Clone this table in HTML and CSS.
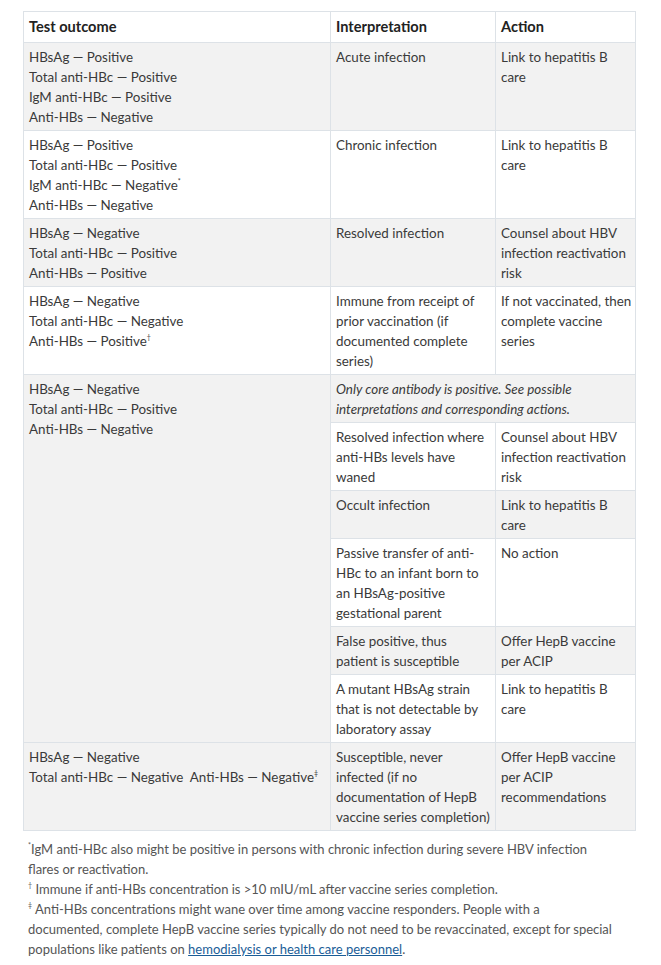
FILE: index.html
```html
<!DOCTYPE html>
<html>
<head>
<meta charset="utf-8">
<link rel="stylesheet" href="styles.css">
</head>
<body>
<div class="page">
<table class="hbv">
  <colgroup>
    <col class="c1"><col class="c2"><col class="c3">
  </colgroup>
  <thead>
    <tr><th>Test outcome</th><th>Interpretation</th><th>Action</th></tr>
  </thead>
  <tbody>
    <tr>
      <td>HBsAg — Positive<br>Total anti-HBc — Positive<br>IgM anti-HBc — Positive<br>Anti-HBs — Negative</td>
      <td>Acute infection</td>
      <td>Link to hepatitis B care</td>
    </tr>
    <tr>
      <td>HBsAg — Positive<br>Total anti-HBc — Positive<br>IgM anti-HBc — Negative<sup>*</sup><br>Anti-HBs — Negative</td>
      <td>Chronic infection</td>
      <td>Link to hepatitis B care</td>
    </tr>
    <tr>
      <td>HBsAg — Negative<br>Total anti-HBc — Positive<br>Anti-HBs — Positive</td>
      <td>Resolved infection</td>
      <td>Counsel about HBV infection reactivation risk</td>
    </tr>
    <tr>
      <td>HBsAg — Negative<br>Total anti-HBc — Negative<br>Anti-HBs — Positive<sup>†</sup></td>
      <td>Immune from receipt of prior vaccination (if documented complete series)</td>
      <td>If not vaccinated, then complete vaccine series</td>
    </tr>
    <tr>
      <td rowspan="6">HBsAg — Negative<br>Total anti-HBc — Positive<br>Anti-HBs — Negative</td>
      <td colspan="2"><em>Only core antibody is positive. See possible interpretations and corresponding actions.</em></td>
    </tr>
    <tr>
      <td>Resolved infection where anti-HBs levels have waned</td>
      <td>Counsel about HBV infection reactivation risk</td>
    </tr>
    <tr>
      <td>Occult infection</td>
      <td>Link to hepatitis B care</td>
    </tr>
    <tr>
      <td>Passive transfer of anti-HBc to an infant born to an HBsAg-positive gestational parent</td>
      <td>No action</td>
    </tr>
    <tr>
      <td>False positive, thus<br>patient is susceptible</td>
      <td>Offer HepB vaccine per ACIP</td>
    </tr>
    <tr>
      <td>A mutant HBsAg strain that is not detectable by laboratory assay</td>
      <td>Link to hepatitis B care</td>
    </tr>
    <tr>
      <td>HBsAg — Negative<br><span class="nowrap">Total anti-HBc — Negative&nbsp; Anti-HBs — Negative<sup>‡</sup></span></td>
      <td>Susceptible, never<br>infected (if no documentation of HepB vaccine series completion)</td>
      <td>Offer HepB vaccine per ACIP recommendations</td>
    </tr>
  </tbody>
</table>
<div class="notes">
  <p><sup>*</sup>IgM anti-HBc also might be positive in persons with chronic infection during severe HBV infection flares or reactivation.</p>
  <p><sup>†</sup> Immune if anti-HBs concentration is &gt;10 mIU/mL after vaccine series completion.</p>
  <p><sup>‡</sup> Anti-HBs concentrations might wane over time among vaccine responders. People with a documented, complete HepB vaccine series typically do not need to be revaccinated, except for special populations like patients on <a href="#">hemodialysis or health care personnel</a>.</p>
</div>
</div>
</body>
</html>
```
FILE: styles.css
```css
html, body {
  margin: 0;
  padding: 0;
  background: #ffffff;
}
.page {
  padding: 11px 0 0 23px;
  font-family: Lato, "Noto Sans", sans-serif;
  font-size: 13.4px;
  line-height: 20px;
  color: #3a3a3a;
}
.hbv {
  border-collapse: collapse;
  width: 612px;
  table-layout: fixed;
}
.c1 { width: 307px; }
.c2 { width: 165px; }
.c3 { width: 140px; }
.hbv th, .hbv td {
  border: 1px solid #dde2e7;
  padding: 4px 0 3px 5px;
  text-align: left;
  vertical-align: top;
}
.hbv th {
  font-weight: 700;
  font-size: 14.6px;
  line-height: 22px;
  color: #222222;
  padding-top: 4px;
  padding-bottom: 4px;
}
.hbv tbody tr:nth-child(odd) td {
  background: #f2f2f2;
}
.hbv em {
  font-style: italic;
}
.nowrap {
  white-space: nowrap;
}
sup {
  font-size: 7px;
  line-height: 0;
  vertical-align: 6px;
}
.notes {
  margin-top: 8px;
  padding-left: 5px;
  width: 585px;
  font-size: 13px;
  color: #555555;
}
.notes p {
  margin: 0;
}
.notes a {
  color: #1a5d97;
  text-decoration: underline;
}
```
